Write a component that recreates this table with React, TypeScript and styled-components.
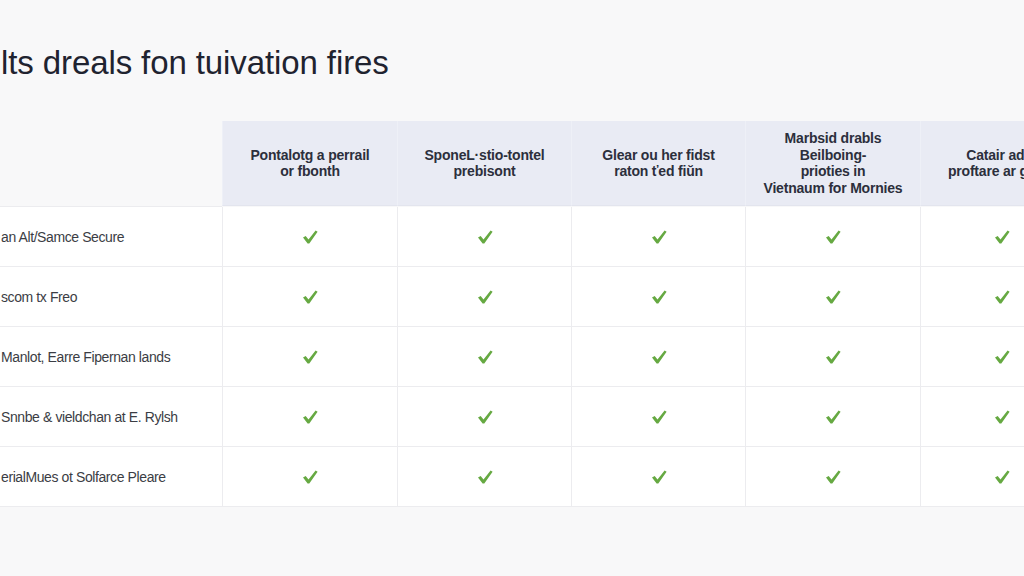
import React from 'react';
import styled, { createGlobalStyle } from 'styled-components';

const GlobalStyle = createGlobalStyle`
    html, body {
        margin: 0;
        padding: 0;
        background: #f8f8f9;
    }
`;

const Page = styled.div`
    width: 1024px;
    height: 576px;
    overflow: hidden;
    background: #f8f8f9;
    font-family: 'Liberation Sans', Arial, sans-serif;
`;

const Title = styled.h1`
    margin: 0;
    padding: 46px 0 0 1px;
    font-size: 33px;
    line-height: 33px;
    font-weight: 400;
    letter-spacing: -0.1px;
    color: #1f2330;
    white-space: nowrap;
`;

const Table = styled.div`
    display: grid;
    grid-template-columns: 222px 175px 174px 174px 175px 162px;
    width: 1082px;
    margin-top: 42px;
`;

const Corner = styled.div`
    height: 85px;
    border-bottom: 1px solid #ececef;
`;

const HeadCell = styled.div`
    height: 85px;
    display: flex;
    align-items: center;
    justify-content: center;
    padding: 0 10px;
    box-sizing: border-box;
    background: #e9ebf4;
    border-left: 1px solid #eef0f7;
    border-bottom: 1px solid #e3e5ee;
    text-align: center;
    font-size: 14px;
    line-height: 16.5px;
    font-weight: 700;
    letter-spacing: -0.2px;
    color: #2c2f3c;
    white-space: nowrap;
`;

const Label = styled.div`
    height: 60px;
    display: flex;
    align-items: center;
    padding-left: 1px;
    box-sizing: border-box;
    background: #fff;
    border-bottom: 1px solid #ececef;
    font-size: 14px;
    letter-spacing: -0.4px;
    color: #3b3d44;
    white-space: nowrap;
`;

const Cell = styled.div`
    height: 60px;
    display: flex;
    align-items: center;
    justify-content: center;
    box-sizing: border-box;
    background: #fff;
    border-left: 1px solid #ececef;
    border-bottom: 1px solid #ececef;
`;

const Check = () => (
    <svg width="18" height="18" viewBox="0 0 18 18">
        <path
            d="M2 9.6 L4.7 8 L7.5 11.4 L14.6 2.4 L16.6 3.8 L8.3 15.4 L6.6 15.4 Z"
            fill="#66a942"
        />
    </svg>
);

const headers: string[][] = [
    ['Pontalotg a perrail', 'or fbonth'],
    ['SponeL·stio-tontel', 'prebisont'],
    ['Glear ou her fidst', 'raton ťed fiŭn'],
    ['Marbsid drabls', 'Beilboing-', 'prioties in', 'Vietnaum for Mornies'],
    ['Catair adm', 'proftare ar gavin'],
];

const rows = [
    'an Alt/Samce Secure',
    'scom tx Freo',
    'Manlot, Earre Fipernan lands',
    'Snnbe & vieldchan at E. Rylsh',
    'erialMues ot Solfarce Pleare',
];

const App: React.FC = () => {
    return (
        <Page>
            <GlobalStyle />
            <Title>lts dreals fon tuivation fires</Title>
            <Table>
                <Corner />
                {headers.map((lines, i) => (
                    <HeadCell key={i}>
                        <span>
                            {lines.map((l, j) => (
                                <React.Fragment key={j}>
                                    {l}
                                    {j < lines.length - 1 && <br />}
                                </React.Fragment>
                            ))}
                        </span>
                    </HeadCell>
                ))}
                {rows.map((label) => (
                    <React.Fragment key={label}>
                        <Label>{label}</Label>
                        {headers.map((_, i) => (
                            <Cell key={i}>
                                <Check />
                            </Cell>
                        ))}
                    </React.Fragment>
                ))}
            </Table>
        </Page>
    );
};

export default App;
